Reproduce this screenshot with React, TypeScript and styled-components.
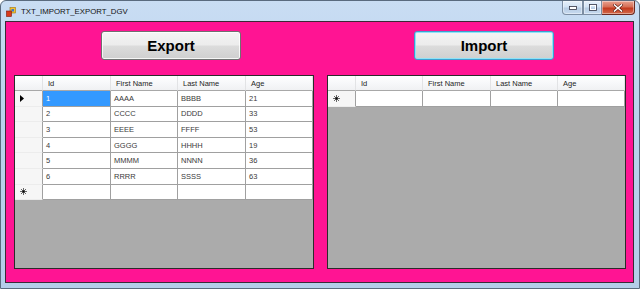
import styled, { createGlobalStyle } from 'styled-components';

const GlobalStyle = createGlobalStyle`
  html, body {
    margin: 0;
    padding: 0;
    background: #ffffff;
  }
  * {
    box-sizing: border-box;
  }
`;

interface Person {
  id: number;
  first: string;
  last: string;
  age: number;
}

const people: Person[] = [
  { id: 1, first: 'AAAA', last: 'BBBB', age: 21 },
  { id: 2, first: 'CCCC', last: 'DDDD', age: 33 },
  { id: 3, first: 'EEEE', last: 'FFFF', age: 53 },
  { id: 4, first: 'GGGG', last: 'HHHH', age: 19 },
  { id: 5, first: 'MMMM', last: 'NNNN', age: 36 },
  { id: 6, first: 'RRRR', last: 'SSSS', age: 63 },
];

const LEFT_COLS = '28px 68px 67px 68px 67px';
const RIGHT_COLS = '28px 67px 68px 67px 67px';

// Window chrome (Windows 7 aero look)
const Window = styled.div`
  width: 640px;
  height: 289px;
  display: flex;
  flex-direction: column;
  background: linear-gradient(180deg, #c9ddf3 0%, #bad2ec 40%, #b4cde9 100%);
  border: 1px solid #5a6b7e;
  border-radius: 6px 6px 0 0;
  overflow: hidden;
`;

const TitleBar = styled.div`
  height: 20px;
  display: flex;
  align-items: flex-start;
  padding-left: 5px;
  flex-shrink: 0;
`;

const AppIcon = styled.svg`
  width: 10px;
  height: 10px;
  margin-top: 6px;
`;

const Title = styled.span`
  font-family: 'Liberation Sans', Arial, sans-serif;
  font-size: 7.8px;
  color: #111;
  margin-top: 6px;
  margin-left: 5px;
`;

const Caption = styled.div`
  margin-left: auto;
  margin-right: 4px;
  display: flex;
  height: 14px;
`;

const CaptionButton = styled.div<{ $w: number; $close?: boolean }>`
  width: ${(p) => p.$w}px;
  height: 14px;
  display: flex;
  align-items: center;
  justify-content: center;
  border: 1px solid ${(p) => (p.$close ? '#6b2a21' : '#7d8ea3')};
  border-top: none;
  border-left-width: ${(p) => (p.$close ? 0 : 1)}px;
  border-radius: ${(p) => (p.$close ? '0 0 4px 0' : '0')};
  background: ${(p) =>
    p.$close
      ? 'linear-gradient(180deg, #e9a291 0%, #d66e55 45%, #c23a1f 55%, #d46a4c 100%)'
      : 'linear-gradient(180deg, rgba(255,255,255,0.55) 0%, rgba(220,232,246,0.5) 45%, rgba(170,190,214,0.55) 55%, rgba(200,218,238,0.6) 100%)'};
  box-shadow: inset 0 0 0 1px rgba(255, 255, 255, 0.4);

  &:first-child {
    border-radius: 0 0 0 4px;
  }
`;

const ClientArea = styled.div`
  flex: 1;
  margin: 0 5px 5px 4px;
  background: #ff1493;
  border: 1px solid #3a2a35;
  display: grid;
  grid-template-columns: 300px 299px;
  column-gap: 13px;
  padding: 9px 7px 13px 8px;
`;

const Panel = styled.div`
  display: flex;
  flex-direction: column;
  gap: 15px;
`;

const ActionButton = styled.button<{ $focused?: boolean }>`
  margin-left: 87px;
  width: 140px;
  height: 29px;
  padding: 0;
  border: 1px solid ${(p) => (p.$focused ? '#3c9fd0' : '#707070')};
  border-radius: 3px;
  background: linear-gradient(180deg, #f4f4f4 0%, #ececec 48%, #dcdcdc 52%, #cfcfcf 100%);
  box-shadow: ${(p) =>
    p.$focused ? 'inset 0 0 0 1px #8fe3f8' : 'inset 0 0 0 1px rgba(255,255,255,0.8)'};
  font-family: 'Liberation Sans', Arial, sans-serif;
  font-weight: bold;
  font-size: 15px;
  color: #000;
`;

// DataGridView
const Grid = styled.div`
  height: 194px;
  background: #ababab;
  border: 1px solid #2b2b2b;
  display: flex;
  flex-direction: column;
  overflow: hidden;
`;

const Row = styled.div<{ $cols: string; $h: number }>`
  display: grid;
  grid-template-columns: ${(p) => p.$cols};
  height: ${(p) => p.$h}px;
  flex-shrink: 0;
`;

const HeadCell = styled.div`
  display: flex;
  align-items: center;
  padding-left: 5px;
  background: linear-gradient(180deg, #ffffff 0%, #f7f8fa 50%, #f0f1f3 100%);
  border-right: 1px solid #e2e3e5;
  border-bottom: 1px solid #a8a8a8;
  font-family: 'Liberation Sans', Arial, sans-serif;
  font-size: 7.5px;
  color: #1e1e1e;
  white-space: nowrap;
`;

const RowHead = styled.div`
  display: flex;
  align-items: center;
  padding-left: 5px;
  background: #f6f6f6;
  border-right: 1px solid #a0a0a0;
  border-bottom: 1px solid #ececec;
`;

const Cell = styled.div<{ $selected?: boolean }>`
  display: flex;
  align-items: center;
  padding-left: 3px;
  background: ${(p) => (p.$selected ? '#3399ff' : '#ffffff')};
  border-right: 1px solid #a0a0a0;
  border-bottom: 1px solid #a0a0a0;
  font-family: 'Liberation Sans', Arial, sans-serif;
  font-size: 7.5px;
  color: ${(p) => (p.$selected ? '#ffffff' : '#3a3a3a')};
  white-space: nowrap;
`;

const CurrentArrow = () => (
  <svg width="4" height="7" viewBox="0 0 4 7">
    <polygon points="0,0 4,3.5 0,7" fill="#000" />
  </svg>
);

const NewRowStar = () => (
  <svg width="7" height="7" viewBox="0 0 7 7">
    <g stroke="#444" strokeWidth="0.8">
      <line x1="3.5" y1="0" x2="3.5" y2="7" />
      <line x1="0" y1="3.5" x2="7" y2="3.5" />
      <line x1="1" y1="1" x2="6" y2="6" />
      <line x1="6" y1="1" x2="1" y2="6" />
    </g>
    <rect x="2.5" y="2.5" width="2" height="2" fill="#000" />
  </svg>
);

const headers = ['Id', 'First Name', 'Last Name', 'Age'];

function DataGrid({ cols, rows }: { cols: string; rows: Person[] }) {
  return (
    <Grid>
      <Row $cols={cols} $h={15}>
        <HeadCell />
        {headers.map((h) => (
          <HeadCell key={h}>{h}</HeadCell>
        ))}
      </Row>
      {rows.map((r, i) => (
        <Row key={r.id} $cols={cols} $h={15.6}>
          <RowHead>{i === 0 && <CurrentArrow />}</RowHead>
          <Cell $selected={i === 0}>{r.id}</Cell>
          <Cell>{r.first}</Cell>
          <Cell>{r.last}</Cell>
          <Cell>{r.age}</Cell>
        </Row>
      ))}
      <Row $cols={cols} $h={15.6}>
        <RowHead>
          <NewRowStar />
        </RowHead>
        <Cell />
        <Cell />
        <Cell />
        <Cell />
      </Row>
    </Grid>
  );
}

export default function App() {
  return (
    <>
      <GlobalStyle />
      <Window>
        <TitleBar>
          <AppIcon viewBox="0 0 10 10">
            <rect x="4" y="0.5" width="5.5" height="5.5" fill="#f2c230" stroke="#a07010" strokeWidth="0.6" />
            <rect x="5.5" y="2" width="2.5" height="2.5" fill="#3a78d0" />
            <rect x="0.5" y="4" width="5" height="5.5" fill="#d83a1c" stroke="#7a1a0a" strokeWidth="0.6" />
          </AppIcon>
          <Title>TXT_IMPORT_EXPORT_DGV</Title>
          <Caption>
            <CaptionButton $w={21}>
              <svg width="8" height="4" viewBox="0 0 8 4">
                <rect x="0.5" y="0.5" width="7" height="3" fill="#fff" stroke="#334" strokeWidth="0.8" />
              </svg>
            </CaptionButton>
            <CaptionButton $w={19}>
              <svg width="8" height="7" viewBox="0 0 8 7">
                <rect x="0.5" y="0.5" width="7" height="6" fill="none" stroke="#334" strokeWidth="0.8" />
                <rect x="1.5" y="1.5" width="5" height="4" fill="none" stroke="#fff" strokeWidth="1" />
              </svg>
            </CaptionButton>
            <CaptionButton $w={33} $close>
              <svg width="10" height="8" viewBox="0 0 10 8">
                <g strokeLinecap="square">
                  <line x1="1.5" y1="1" x2="8.5" y2="7" stroke="#5a1a10" strokeWidth="2.8" />
                  <line x1="8.5" y1="1" x2="1.5" y2="7" stroke="#5a1a10" strokeWidth="2.8" />
                  <line x1="1.5" y1="1" x2="8.5" y2="7" stroke="#fff" strokeWidth="1.6" />
                  <line x1="8.5" y1="1" x2="1.5" y2="7" stroke="#fff" strokeWidth="1.6" />
                </g>
              </svg>
            </CaptionButton>
          </Caption>
        </TitleBar>
        <ClientArea>
          <Panel>
            <ActionButton>Export</ActionButton>
            <DataGrid cols={LEFT_COLS} rows={people} />
          </Panel>
          <Panel>
            <ActionButton $focused>Import</ActionButton>
            <DataGrid cols={RIGHT_COLS} rows={[]} />
          </Panel>
        </ClientArea>
      </Window>
    </>
  );
}
